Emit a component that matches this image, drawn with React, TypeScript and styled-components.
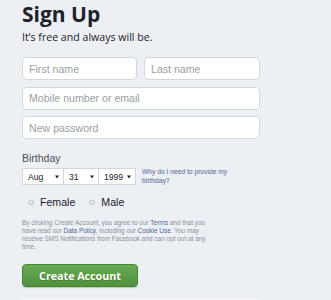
import React from "react";
import styled, { createGlobalStyle } from "styled-components";

const Global = createGlobalStyle`
  html, body { margin: 0; padding: 0; }
  body {
    background: #eceff4;
    width: 331px;
    height: 300px;
    overflow: hidden;
  }
`;

const Page = styled.div`
  box-sizing: border-box;
  width: 331px;
  height: 300px;
  padding: 0 0 0 22px;
  display: flex;
  flex-direction: column;
  font-family: "Liberation Sans", Arial, sans-serif;
  color: #1d2129;
`;

const Title = styled.h1`
  margin: 0;
  font-family: "Open Sans", sans-serif;
  font-weight: 700;
  font-size: 21px;
  line-height: 28px;
  color: #1d2129;
`;

const Subtitle = styled.div`
  margin-top: 1.5px;
  font-family: "Open Sans", sans-serif;
  font-size: 10.6px;
  line-height: 15px;
  color: #1d2129;
`;

const Fields = styled.div`
  margin-top: 12.5px;
  width: 238px;
  display: flex;
  flex-direction: column;
  gap: 6.5px;
`;

const NameRow = styled.div`
  display: grid;
  grid-template-columns: 115px 116px;
  gap: 7px;
`;

const Input = styled.input`
  box-sizing: border-box;
  width: 100%;
  height: 23px;
  margin: 0;
  padding: 0 6px;
  border: 1px solid #d3d6db;
  border-radius: 4px;
  background: #fff;
  font-family: "Liberation Sans", Arial, sans-serif;
  font-size: 10.6px;
  color: #1d2129;
  outline: none;
  &::placeholder {
    color: #9a9ea5;
  }
`;

const Label = styled.div`
  margin-top: 13px;
  font-size: 10.5px;
  line-height: 12px;
  color: #4b4f56;
`;

const BirthRow = styled.div`
  margin-top: 4px;
  display: flex;
  align-items: center;
  gap: 6px;
`;

const Selects = styled.div`
  display: flex;
`;

const SelectBox = styled.div<{ $w: number; $first?: boolean }>`
  box-sizing: border-box;
  width: ${(p) => p.$w}px;
  height: 17px;
  display: flex;
  align-items: center;
  justify-content: space-between;
  padding: 0 4px 0 5px;
  background: #fff;
  border: 1px solid #d3d6db;
  border-left-width: ${(p) => (p.$first ? 1 : 0)}px;
  font-size: 8.6px;
  color: #1d2129;
`;

const Arrow = styled.svg`
  width: 4px;
  height: 4px;
  fill: #1d2129;
`;

const WhyLink = styled.a`
  width: 90px;
  font-size: 6.7px;
  line-height: 8.7px;
  color: #56688f;
  text-decoration: none;
`;

const GenderRow = styled.div`
  margin-top: 11px;
  display: flex;
  align-items: center;
  padding-left: 6px;
  gap: 14px;
`;

const GenderOption = styled.label`
  display: flex;
  align-items: center;
  gap: 6.5px;
  font-size: 10.6px;
  line-height: 12px;
  color: #1d2129;
`;

const Radio = styled.span`
  box-sizing: border-box;
  width: 5.5px;
  height: 5.5px;
  border-radius: 50%;
  border: 1px solid #b8bcc3;
  background: linear-gradient(#f4f5f7, #dfe2e6);
`;

const Terms = styled.p`
  margin: 10.5px 0 0 0;
  width: 192px;
  font-size: 6.45px;
  line-height: 8.1px;
  color: #8d9199;
`;

const TermsLink = styled.a`
  color: #4f6694;
  text-decoration: none;
`;

const Button = styled.button`
  margin-top: 13px;
  box-sizing: border-box;
  width: 116px;
  height: 24px;
  padding: 0;
  border: 1px solid #44852f;
  border-radius: 4px;
  background: linear-gradient(#6aab55, #4f913c);
  box-shadow: 0 1px 1px rgba(0, 0, 0, 0.18);
  font-family: "Open Sans", sans-serif;
  font-weight: 700;
  font-size: 10.7px;
  color: #fff;
  text-shadow: 0 1px 1px rgba(0, 0, 0, 0.2);
  cursor: pointer;
`;

const Divider = styled.div`
  margin-top: 12px;
  width: 238px;
  height: 1px;
  background: #f3f5f8;
`;

const DownArrow = () => (
  <Arrow viewBox="0 0 4 4">
    <polygon points="0,0.5 4,0.5 2,3.5" />
  </Arrow>
);

const selects = [
  { value: "Aug", w: 42 },
  { value: "31", w: 35 },
  { value: "1999", w: 37 },
];

export default function App() {
  return (
    <>
      <Global />
      <Page>
        <Title>Sign Up</Title>
        <Subtitle>It’s free and always will be.</Subtitle>
        <Fields>
          <NameRow>
            <Input placeholder="First name" />
            <Input placeholder="Last name" />
          </NameRow>
          <Input placeholder="Mobile number or email" />
          <Input placeholder="New password" type="password" />
        </Fields>
        <Label>Birthday</Label>
        <BirthRow>
          <Selects>
            {selects.map((s, i) => (
              <SelectBox key={s.value} $w={s.w} $first={i === 0}>
                <span>{s.value}</span>
                <DownArrow />
              </SelectBox>
            ))}
          </Selects>
          <WhyLink href="#">Why do I need to provide my birthday?</WhyLink>
        </BirthRow>
        <GenderRow>
          <GenderOption>
            <Radio />
            Female
          </GenderOption>
          <GenderOption>
            <Radio />
            Male
          </GenderOption>
        </GenderRow>
        <Terms>
          By clicking Create Account, you agree to our <TermsLink href="#">Terms</TermsLink> and that you
          have read our <TermsLink href="#">Data Policy</TermsLink>, including our{" "}
          <TermsLink href="#">Cookie Use</TermsLink>. You may receive SMS Notifications from Facebook and can
          opt out at any time.
        </Terms>
        <Button>Create Account</Button>
        <Divider />
      </Page>
    </>
  );
}
